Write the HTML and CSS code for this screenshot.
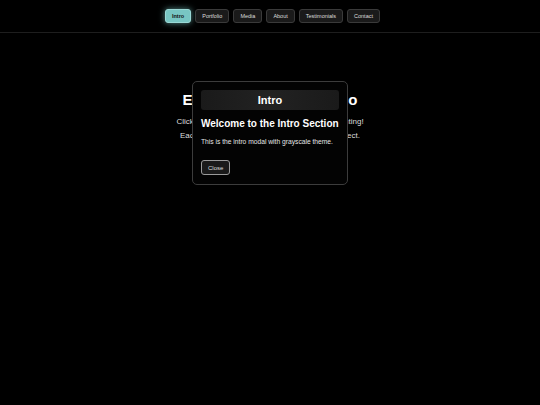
FILE: index.html
```html
<!DOCTYPE html>
<html lang="en">
<head>
<meta charset="utf-8">
<title>Modal Demo</title>
<link rel="stylesheet" href="styles.css">
</head>
<body>
<nav class="nav">
  <button class="nav-btn active">Intro</button>
  <button class="nav-btn">Portfolio</button>
  <button class="nav-btn">Media</button>
  <button class="nav-btn">About</button>
  <button class="nav-btn">Testimonials</button>
  <button class="nav-btn">Contact</button>
</nav>
<main class="main">
  <h1 class="title">Explore the Modal Demo</h1>
  <p class="lead">Click any button above to see the modal highlighting!</p>
  <p class="lead">Each modal has a unique grayscale glowing effect.</p>
</main>
<div class="overlay">
  <div class="modal">
    <div class="modal-head">Intro</div>
    <h2 class="modal-title">Welcome to the Intro Section</h2>
    <p class="modal-text">This is the intro modal with grayscale theme.</p>
    <button class="close-btn">Close</button>
  </div>
</div>
</body>
</html>
```
FILE: styles.css
```css
html, body {
  margin: 0;
  padding: 0;
  background: #000;
  color: #fff;
  font-family: "Liberation Sans", Arial, sans-serif;
  height: 100%;
}
.nav {
  display: flex;
  justify-content: center;
  gap: 4px;
  padding: 9px 0 9px 5px;
  border-bottom: 1px solid #1e1e1e;
}
.nav-btn {
  font-family: "Liberation Sans", Arial, sans-serif;
  font-size: 5.5px;
  line-height: 8px;
  height: 14px;
  padding: 2px 6px;
  border: 1px solid #3a3a3a;
  border-radius: 3px;
  background: #1a1a1a;
  color: #ddd;
}
.nav-btn.active {
  background: #78c6c3;
  border-color: #9ad8d5;
  color: #111;
  font-weight: bold;
  box-shadow: 0 0 6px rgba(120, 198, 195, 0.7);
}
.main {
  text-align: center;
  padding-top: 58px;
}
.title {
  margin: 0 0 9px;
  font-size: 15px;
  line-height: 18px;
  font-weight: bold;
}
.lead {
  margin: 0 0 6px;
  font-size: 8px;
  line-height: 8px;
  color: #ddd;
}
.overlay {
  position: absolute;
  inset: 0;
  display: flex;
  justify-content: center;
  align-items: flex-start;
  padding-top: 81px;
}
.modal {
  width: 138px;
  padding: 8px 8px 9px;
  background: #030303;
  border: 1px solid #3c3c3c;
  border-radius: 5px;
}
.modal-head {
  height: 20px;
  line-height: 20px;
  text-align: center;
  font-size: 11px;
  font-weight: bold;
  color: #fff;
  border-radius: 3px;
  background: linear-gradient(90deg, #1a1a1a, #222 50%, #1a1a1a);
}
.modal-title {
  margin: 7px 0 0;
  font-size: 10px;
  line-height: 13px;
  font-weight: bold;
  color: #fff;
  white-space: nowrap;
}
.modal-text {
  margin: 7px 0 0;
  font-size: 6.7px;
  line-height: 9px;
  color: #e6e6e6;
  white-space: nowrap;
}
.close-btn {
  display: block;
  margin-top: 14px;
  font-family: "Liberation Sans", Arial, sans-serif;
  font-size: 6px;
  line-height: 8px;
  height: 15px;
  padding: 2px 6px;
  border: 1px solid #9a9a9a;
  border-radius: 3px;
  background: #1a1a1a;
  color: #ddd;
}
```
